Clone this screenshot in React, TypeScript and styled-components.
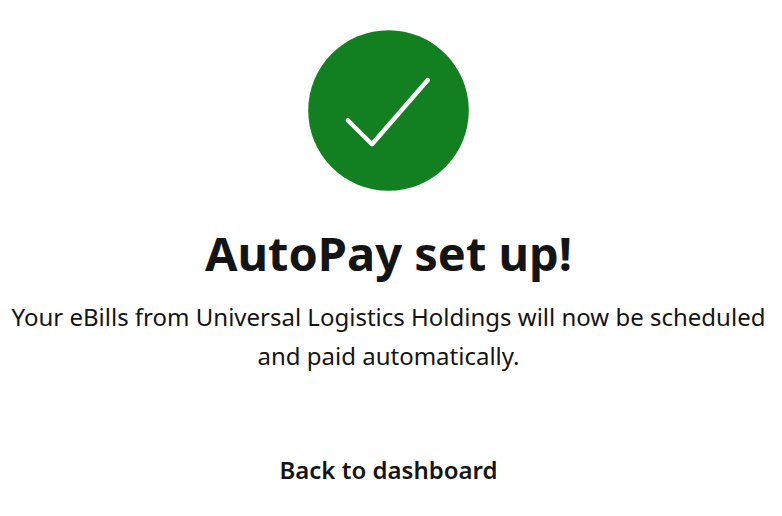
import React from "react";
import styled, { createGlobalStyle } from "styled-components";

const GlobalStyle = createGlobalStyle`
  *, *::before, *::after { box-sizing: border-box; }
  body {
    margin: 0;
    background: #ffffff;
    color: #141414;
    font-family: "Noto Sans", "Open Sans", sans-serif;
  }
`;

const Page = styled.main`
  display: flex;
  flex-direction: column;
  align-items: center;
  padding: 30px 13px 24px 8px;
  text-align: center;
`;

const SuccessIcon = styled.svg`
  display: block;
  width: 161px;
  height: 161px;
`;

const Title = styled.h1`
  margin: 32px 0 0;
  font-size: 47px;
  font-weight: 700;
  line-height: 60px;
`;

const Message = styled.p`
  max-width: 762px;
  margin: 14px 0 0;
  font-size: 24px;
  line-height: 39px;
`;

const BackButton = styled.button`
  margin-top: 71px;
  padding: 4px 8px;
  border: 0;
  background: transparent;
  color: inherit;
  font: inherit;
  font-size: 24px;
  font-weight: 600;
  line-height: 40px;
  cursor: pointer;
`;

export default function App() {
  return (
    <>
      <GlobalStyle />
      <Page>
        <SuccessIcon viewBox="0 0 161 161" aria-hidden="true">
          <circle cx="80.5" cy="80.5" r="80.3" fill="#128020" />
          <path
            d="M39.8 90.2 L64 114.2 L119.8 50"
            fill="none"
            stroke="#ffffff"
            strokeWidth="4.4"
            strokeLinecap="round"
            strokeLinejoin="round"
          />
        </SuccessIcon>
        <Title>AutoPay set up!</Title>
        <Message>
          Your eBills from Universal Logistics Holdings will now be scheduled and paid automatically.
        </Message>
        <BackButton type="button">Back to dashboard</BackButton>
      </Page>
    </>
  );
}
